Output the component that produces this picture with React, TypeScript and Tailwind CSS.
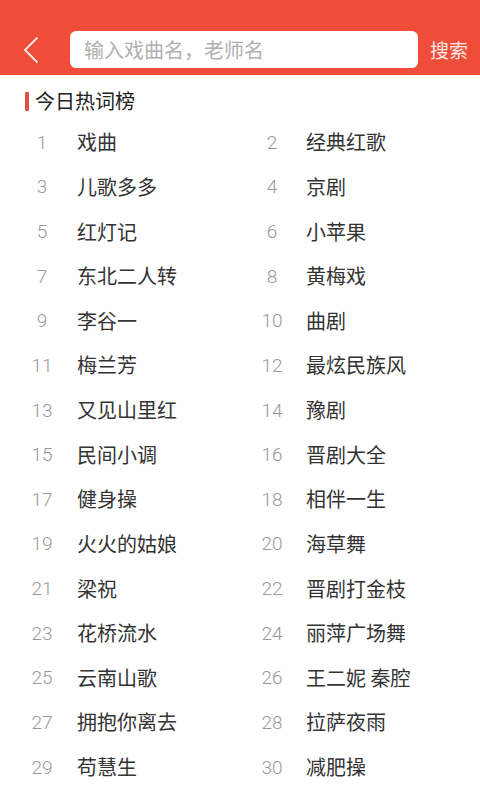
import React from 'react'

const words = [
  '戏曲', '经典红歌', '儿歌多多', '京剧', '红灯记', '小苹果', '东北二人转', '黄梅戏',
  '李谷一', '曲剧', '梅兰芳', '最炫民族风', '又见山里红', '豫剧', '民间小调', '晋剧大全',
  '健身操', '相伴一生', '火火的姑娘', '海草舞', '梁祝', '晋剧打金枝', '花桥流水', '丽萍广场舞',
  '云南山歌', '王二妮 秦腔', '拥抱你离去', '拉萨夜雨', '苟慧生', '减肥操',
]

export default function App() {
  return (
    <div
      className="w-[480px] h-[800px] bg-white overflow-hidden"
      style={{ fontFamily: '"Noto Sans CJK SC", "Noto Sans", sans-serif' }}
    >
      {/* header */}
      <header className="h-[75px] bg-[#ef4d3a] flex items-end pb-[7px]">
        <button className="w-[64px] h-[37px] flex items-center justify-center">
          <svg width="20" height="28" viewBox="0 0 20 28" fill="none">
            <path d="M15 2 L3 14 L15 26" stroke="#fde8e4" strokeWidth="1.8" strokeLinecap="round" strokeLinejoin="round" />
          </svg>
        </button>
        <div className="ml-[6px] w-[348px] h-[37px] bg-white rounded-[6px] flex items-center px-[14px]">
          <span className="text-[20px] text-[#b0b0b0] leading-none">输入戏曲名，老师名</span>
        </div>
        <span className="ml-[12px] h-[37px] flex items-center text-[19px] text-[#fde8e4] leading-none">搜索</span>
      </header>

      {/* title */}
      <div className="h-[45px] flex items-center pl-[25px] pt-[7px]">
        <div className="w-[4px] h-[19px] bg-[#e0513f] rounded-[1px]" />
        <span className="ml-[6px] text-[20px] text-[#222] leading-none">今日热词榜</span>
      </div>

      {/* list */}
      <div className="grid grid-cols-[230px_230px] px-[20px]">
        {words.map((w, i) => (
          <div key={i} className="h-[44.64px] flex items-center">
            <span
              className="w-[44px] text-center text-[19px] font-light text-[#999] leading-none"
              style={{ fontFamily: 'Roboto, "Noto Sans", sans-serif' }}
            >
              {i + 1}
            </span>
            <span className={`${i % 2 === 0 ? 'ml-[13px]' : 'ml-[12px]'} text-[20px] text-[#333] leading-none`}>{w}</span>
          </div>
        ))}
      </div>
    </div>
  )
}
